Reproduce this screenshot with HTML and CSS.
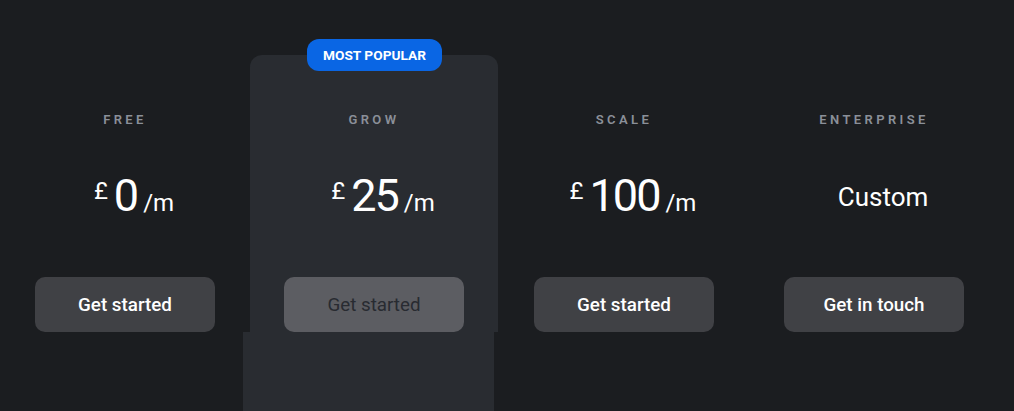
FILE: index.html
```html
<!DOCTYPE html>
<html>
<head>
<meta charset="utf-8">
<link rel="stylesheet" href="styles.css">
</head>
<body>
<div class="plans">
  <div class="plan">
    <div class="label">FREE</div>
    <div class="price"><span class="cur">£</span><span class="amt">0</span><span class="per">/m</span></div>
    <button class="btn">Get started</button>
  </div>
  <div class="plan popular">
    <div class="badge">MOST POPULAR</div>
    <div class="label">GROW</div>
    <div class="price"><span class="cur">£</span><span class="amt">25</span><span class="per">/m</span></div>
    <button class="btn btn-muted">Get started</button>
  </div>
  <div class="plan">
    <div class="label">SCALE</div>
    <div class="price"><span class="cur">£</span><span class="amt">100</span><span class="per">/m</span></div>
    <button class="btn">Get started</button>
  </div>
  <div class="plan">
    <div class="label">ENTERPRISE</div>
    <div class="price"><span class="custom">Custom</span></div>
    <button class="btn">Get in touch</button>
  </div>
</div>
<div class="features">
  <div class="feature-spacer"></div>
  <div class="feature-col"></div>
</div>
</body>
</html>
```
FILE: styles.css
```css
html, body {
  margin: 0;
  padding: 0;
  background: #1b1d20;
  font-family: Roboto, "Liberation Sans", sans-serif;
  color: #ffffff;
  overflow: hidden;
}
.plans {
  display: grid;
  grid-template-columns: 250px 249px 250px 250px;
  padding-top: 55px;
}
.plan {
  position: relative;
  display: flex;
  flex-direction: column;
  align-items: center;
  padding-top: 57px;
}
.popular {
  background: #292c31;
  border-radius: 12px 12px 0 0;
  width: 248px;
}
.badge {
  position: absolute;
  top: -16px;
  left: 57px;
  width: 135px;
  height: 32px;
  background: #0a66e4;
  border-radius: 12px;
  color: #fff;
  font-size: 13.7px;
  font-weight: 700;
  display: flex;
  align-items: center;
  justify-content: center;
}
.label {
  height: 16px;
  line-height: 16px;
  font-size: 13px;
  font-weight: 600;
  letter-spacing: 3.4px;
  color: #8b9099;
  padding-left: 0;
}
.price {
  margin-top: 45px;
  height: 60px;
  display: flex;
  align-items: baseline;
  justify-content: center;
  padding-left: 18px;
  line-height: 1;
}
.cur {
  font-size: 24px;
  align-self: flex-start;
  margin-top: 6px;
  margin-right: 6px;
}
.amt {
  font-size: 45px;
  letter-spacing: -2px;
}
.per {
  font-size: 24px;
  margin-left: 6px;
}
.custom {
  font-size: 26px;
  align-self: flex-start;
  margin-top: 11px;
}
.btn {
  margin-top: 44px;
  width: 180px;
  height: 55px;
  border: 0;
  border-radius: 10px;
  background: #404145;
  color: #fff;
  font-family: Roboto, "Liberation Sans", sans-serif;
  font-size: 18.8px;
  font-weight: 500;
}
.btn-muted {
  background: #5c5d62;
  color: #282b31;
  font-weight: 400;
}
.features {
  display: flex;
}
.feature-spacer {
  width: 243px;
}
.feature-col {
  width: 251px;
  height: 100px;
  background: #292c31;
}
```
